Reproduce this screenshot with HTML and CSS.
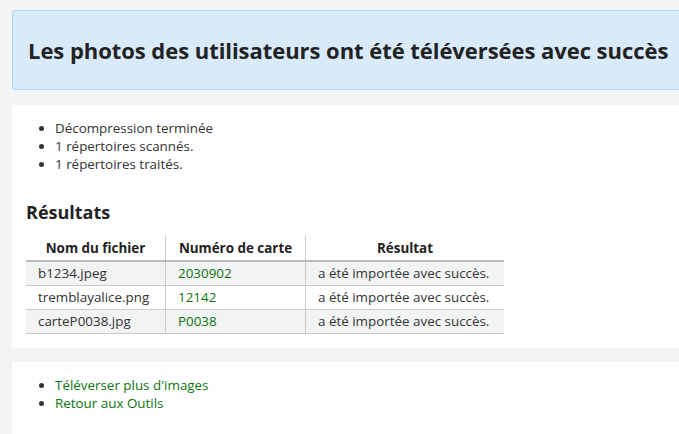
FILE: index.html
```html
<!DOCTYPE html>
<html lang="fr">
<head>
<meta charset="utf-8">
<title>Téléversement</title>
<link rel="stylesheet" href="styles.css">
</head>
<body>
<div class="page">
  <div class="alert">
    <h1 class="alert-title">Les photos des utilisateurs ont été téléversées avec succès</h1>
  </div>
  <section class="panel">
    <ul class="list">
      <li>Décompression terminée</li>
      <li>1 répertoires scannés.</li>
      <li>1 répertoires traités.</li>
    </ul>
    <h2 class="heading">Résultats</h2>
    <table class="results">
      <thead>
        <tr><th class="c1">Nom du fichier</th><th class="c2">Numéro de carte</th><th class="c3">Résultat</th></tr>
      </thead>
      <tbody>
        <tr><td>b1234.jpeg</td><td class="num">2030902</td><td>a été importée avec succès.</td></tr>
        <tr><td>tremblayalice.png</td><td class="num">12142</td><td>a été importée avec succès.</td></tr>
        <tr><td>carteP0038.jpg</td><td class="num">P0038</td><td>a été importée avec succès.</td></tr>
      </tbody>
    </table>
  </section>
  <section class="panel panel-links">
    <ul class="list">
      <li><a href="#">Téléverser plus d'images</a></li>
      <li><a href="#">Retour aux Outils</a></li>
    </ul>
  </section>
</div>
</body>
</html>
```
FILE: styles.css
```css
html, body {
  margin: 0;
  padding: 0;
  overflow: hidden;
  background: #f2f3f3;
}
body {
  font-family: "Open Sans", "Noto Sans", sans-serif;
  font-size: 13.4px;
  color: #333;
}
.page {
  width: 667px;
  padding: 10px 0 0 12px;
}
.alert {
  background: #d9eafb;
  border: 1px solid #b3d8f7;
  border-right: none;
  border-radius: 4px 0 0 4px;
  height: 78px;
  display: flex;
  align-items: center;
  padding-left: 15px;
  margin-bottom: 15px;
  white-space: nowrap;
}
.alert-title {
  margin: 0;
  font-size: 22px;
  font-weight: 700;
  color: #222;
  letter-spacing: -0.05px;
}
.panel {
  background: #fff;
  padding: 14px 14px 14px 14px;
  margin-bottom: 14px;
}
.list {
  margin: 0;
  padding-left: 29px;
  line-height: 18px;
}
.list a {
  color: #0e7410;
  text-decoration: none;
}
.heading {
  margin: 28px 0 13px 0;
  font-size: 18px;
  font-weight: 700;
  color: #222;
  line-height: 22px;
}
.results {
  border-collapse: collapse;
  width: 478px;
  line-height: 23px;
}
.results th {
  font-weight: 700;
  text-align: center;
  color: #222;
  border-bottom: 2px solid #bbb;
  padding: 0 12px;
  line-height: 24px;
}
.results th + th, .results td + td {
  border-left: 1px solid #ccc;
}
.results .c1 { width: 115px; }
.results .c2 { width: 115px; }
.results td {
  padding: 0 12px;
  border-bottom: 1px solid #ccc;
}
.results tbody tr:nth-child(odd) td {
  background: #f2f3f3;
}
.results .num {
  color: #0e7410;
}
.panel-links {
  padding: 14px 14px 0 14px;
  height: 58px;
  margin-bottom: 0;
}
```
